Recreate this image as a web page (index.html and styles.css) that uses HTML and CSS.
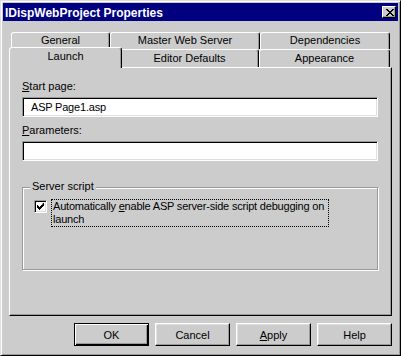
FILE: index.html
```html
<!DOCTYPE html>
<html lang="en">
<head>
  <meta charset="UTF-8">
  <title>IDispWebProject Properties</title>
  <link rel="stylesheet" href="styles.css">
</head>
<body>

  <div class="window">
    <div class="titlebar">
      <span class="title">IDispWebProject Properties</span>
      <button class="close">
        <svg width="8" height="7" viewBox="0 0 8 7"><path d="M0 0h2v1h1v1h2v-1h1v-1h2v1h-1v1h-1v1h-1v1h1v1h1v1h1v1h-2v-1h-1v-1h-2v1h-1v1h-2v-1h1v-1h1v-1h1v-1h-1v-1h-1v-1h-1z" fill="#000"/></svg>
      </button>
    </div>

    <div class="content">
      <div class="tabs">
        <div class="tab-row">
          <div class="tab w-general">General</div>
          <div class="tab w-master">Master Web Server</div>
          <div class="tab w-deps">Dependencies</div>
        </div>
        <div class="tab-row front">
          <div class="tab w-launch active">Launch</div>
          <div class="tab w-editor">Editor Defaults</div>
          <div class="tab w-appear">Appearance</div>
        </div>
      </div>

      <div class="panel">
        <label class="field-label" for="startPage"><u>S</u>tart page:</label>
        <input class="field" type="text" id="startPage" value="ASP Page1.asp">

        <label class="field-label" for="params"><u>P</u>arameters:</label>
        <input class="field" type="text" id="params" value="">

        <div class="group">
          <span class="group-title">Server script</span>
          <div class="check-row">
            <span class="checkbox">
              <svg width="7" height="7" viewBox="0 0 7 7"><path d="M6 0h1v3h-1v1h-1v1h-1v1h-1v1h-1v-1h-1v-1h-1v-3h1v1h1v1h1v-1h1v-1h1z" fill="#000"/></svg>
            </span>
            <span class="check-label">Automatically <u>e</u>nable ASP server-side script debugging on<br>launch</span>
          </div>
        </div>
      </div>

      <div class="buttons">
        <button class="btn default">OK</button>
        <button class="btn">Cancel</button>
        <button class="btn"><u>A</u>pply</button>
        <button class="btn">Help</button>
      </div>
    </div>
  </div>

</body>
</html>
```

FILE: styles.css
```css
body {
  margin: 0;
  background: #cccccc;
  font-family: "Liberation Sans", Arial, sans-serif;
  font-size: 11px;
  color: #000;
}
.window {
  width: 401px;
  height: 356px;
  box-sizing: border-box;
  background: #cccccc;
  border: 1px solid;
  border-color: #dfdfdf #000 #000 #dfdfdf;
  box-shadow: inset 1px 1px #fff, inset -1px -1px #999;
  padding: 2px;
}
.titlebar {
  height: 18px;
  background: #000080;
  display: flex;
  align-items: center;
  justify-content: space-between;
  padding: 0 2px 0 2px;
}
.title {
  color: #fff;
  font-weight: bold;
  font-size: 12px;
  padding-top: 1px;
}
.close {
  width: 14px;
  height: 12px;
  padding: 0;
  margin: 0;
  background: #cccccc;
  border: 1px solid;
  border-color: #fff #000 #000 #fff;
  box-shadow: inset -1px -1px #999;
  display: flex;
  align-items: center;
  justify-content: center;
}
.close svg {
  display: block;
  margin-left: 1px;
}

.content {
  padding: 0 6px;
}
.tabs {
  margin-top: 11px;
  position: relative;
  z-index: 1;
}
.tab-row {
  display: flex;
  margin: 0 2px;
  height: 17px;
}
.tab-row.front {
  height: 18px;
}
.tab {
  box-sizing: border-box;
  height: 100%;
  background: #cccccc;
  border: 1px solid #fff;
  border-bottom: none;
  border-right-color: #000;
  border-radius: 3px 3px 0 0;
  box-shadow: inset -1px 0 #999;
  text-align: center;
  line-height: 15px;
}
.tab-row.front .tab {
  line-height: 17px;
}
.tab.active {
  position: relative;
  margin: -2px -2px 0 -2px;
  height: 21px;
  line-height: 17px;
}
.w-general { width: 99px; }
.w-master { width: 150px; }
.w-deps { width: 130px; }
.w-launch { width: 109px; }
.w-editor { width: 139px; }
.w-appear { width: 131px; }
.tab.w-launch.active { width: 113px; }

.panel {
  height: 249px;
  box-sizing: border-box;
  border: 1px solid;
  border-color: #fff #000 #000 #fff;
  box-shadow: inset -1px -1px #999;
  padding: 12px 13px 0 12px;
}
.field-label {
  display: block;
  line-height: 13px;
  margin-bottom: 4px;
}
.field {
  display: block;
  width: 100%;
  height: 20px;
  box-sizing: border-box;
  margin: 0 0 7px 0;
  padding: 0 0 0 8px;
  font-family: inherit;
  font-size: 11px;
  letter-spacing: -0.2px;
  background: #fff;
  border: 1px solid;
  border-color: #999 #fff #fff #999;
  box-shadow: inset 1px 1px #000, inset -1px -1px #dfdfdf;
  outline: none;
}
.group {
  position: relative;
  margin-top: 26px;
  height: 83px;
  box-sizing: border-box;
  border: 1px solid #999;
  box-shadow: inset 1px 1px #fff, 1px 1px #fff;
  padding: 12px 0 0 11px;
}
.group-title {
  position: absolute;
  top: -8px;
  left: 7px;
  padding: 0 2px;
  background: #cccccc;
  line-height: 13px;
}
.check-row {
  display: flex;
  align-items: flex-start;
  gap: 4px;
}
.checkbox {
  width: 13px;
  height: 13px;
  box-sizing: border-box;
  background: #fff;
  border: 1px solid;
  border-color: #999 #fff #fff #999;
  box-shadow: inset 1px 1px #000, inset -1px -1px #dfdfdf;
  display: flex;
  align-items: center;
  justify-content: center;
}
.check-label {
  margin-top: -1px;
  line-height: 13px;
  letter-spacing: -0.2px;
  padding: 0 4px 0 1px;
  border: 1px dotted #000;
}

.buttons {
  display: flex;
  justify-content: flex-end;
  gap: 6px;
  margin-top: 7px;
}
.btn {
  width: 75px;
  height: 23px;
  box-sizing: border-box;
  padding: 0;
  font-family: inherit;
  font-size: 11px;
  color: #000;
  background: #cccccc;
  border: 1px solid;
  border-color: #fff #000 #000 #fff;
  box-shadow: inset -1px -1px #999, inset 1px 1px #dfdfdf;
}
.btn.default {
  border: 1px solid #000;
  box-shadow: inset 1px 1px #fff, inset -1px -1px #000, inset -2px -2px #999;
}
```
